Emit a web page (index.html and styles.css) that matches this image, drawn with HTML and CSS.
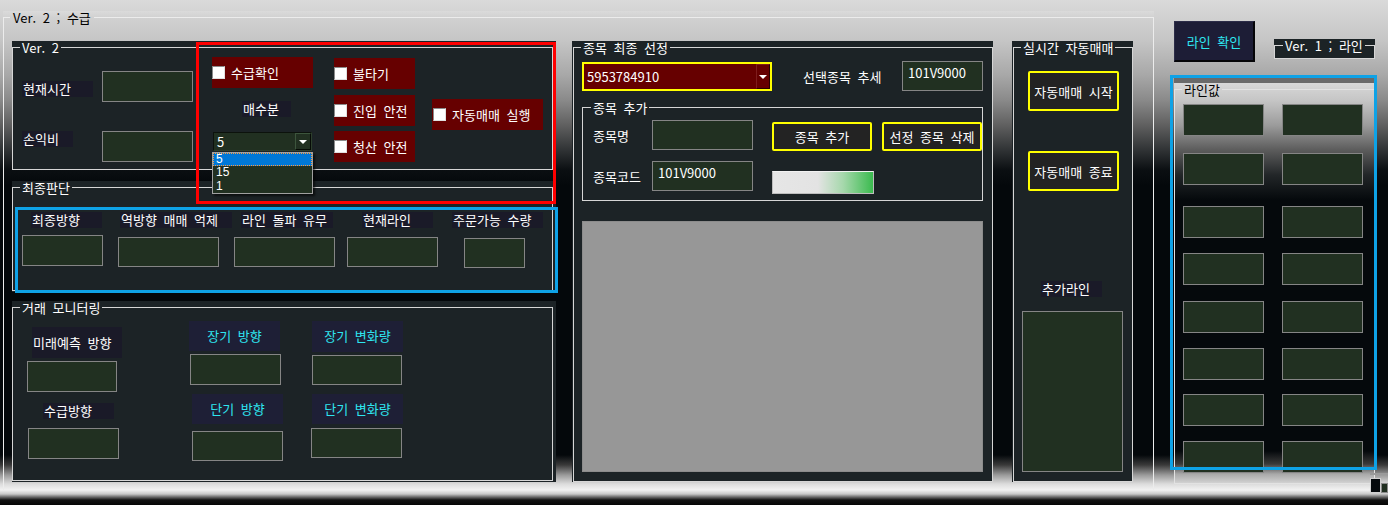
FILE: index.html
```html
<!DOCTYPE html>
<html lang="ko">
<head>
<meta charset="utf-8">
<title>Ver. 2 ; 수급</title>
<link rel="stylesheet" href="styles.css">
</head>
<body>
<div class="screen">
  <div class="tab">
    <fieldset class="outer">
      <legend>Ver. 2 ; 수급</legend>
      <div class="outer-body">
        <div class="col-left">
          <div class="panel p-ver2">
            <fieldset class="grp g-ver2">
              <legend>Ver. 2</legend>
              <div class="ver2-body">
                <div class="v2-a">
                  <span class="lbl l-time">현재시간</span>
                  <div class="box b-std"></div>
                  <span class="lbl l-pl">손익비</span>
                  <div class="box b-std"></div>
                </div>
                <div class="v2-b">
                  <div class="chk c-supply"><span class="cb"></span>수급확인</div>
                  <span class="lbl l-buy">매수분</span>
                  <div class="combo c-buy"><span class="combo-text">5</span><span class="drop-btn"><span class="tri"></span></span></div>
                  <ul class="droplist">
                    <li class="sel">5</li>
                    <li>15</li>
                    <li>1</li>
                  </ul>
                </div>
                <div class="v2-c">
                  <div class="chk c-fire"><span class="cb"></span>불타기</div>
                  <div class="chk c-entry"><span class="cb"></span>진입 안전</div>
                  <div class="chk c-exit"><span class="cb"></span>청산 안전</div>
                </div>
                <div class="v2-d">
                  <div class="chk c-auto"><span class="cb"></span>자동매매 실행</div>
                </div>
              </div>
            </fieldset>
          </div>

          <div class="panel p-final">
            <fieldset class="grp g-final">
              <legend>최종판단</legend>
              <div class="final-body">
                <div class="fcell f1"><span class="lbl">최종방향</span><div class="box"></div></div>
                <div class="fcell f2"><span class="lbl">역방향 매매 억제</span><div class="box"></div></div>
                <div class="fcell f3"><span class="lbl">라인 돌파 유무</span><div class="box"></div></div>
                <div class="fcell f4"><span class="lbl">현재라인</span><div class="box"></div></div>
                <div class="fcell f5"><span class="lbl">주문가능 수량</span><div class="box"></div></div>
              </div>
            </fieldset>
          </div>

          <div class="panel p-mon">
            <fieldset class="grp g-mon">
              <legend>거래 모니터링</legend>
              <div class="mon-body">
                <div class="mcol m1">
                  <span class="lbl lbl-mid l-future">미래예측 방향</span>
                  <div class="box b1"></div>
                  <span class="lbl l-supdir">수급방향</span>
                  <div class="box b2"></div>
                </div>
                <div class="mcol m2">
                  <span class="lbl lbl-cyan l-long">장기 방향</span>
                  <div class="box b3"></div>
                  <span class="lbl lbl-cyan l-short">단기 방향</span>
                  <div class="box b4"></div>
                </div>
                <div class="mcol m3">
                  <span class="lbl lbl-cyan l-longchg">장기 변화량</span>
                  <div class="box b5"></div>
                  <span class="lbl lbl-cyan l-shortchg">단기 변화량</span>
                  <div class="box b6"></div>
                </div>
              </div>
            </fieldset>
          </div>
        </div>

        <div class="panel p-sel">
          <fieldset class="grp g-sel">
            <legend>종목 최종 선정</legend>
            <div class="sel-body">
              <div class="sel-row1">
                <div class="combo c-stock"><span class="combo-text">5953784910</span><span class="drop-btn"><span class="tri"></span></span></div>
                <span class="plain l-trend">선택종목 추세</span>
                <div class="box b-trend">101V9000</div>
              </div>
              <fieldset class="grp g-add">
                <legend>종목 추가</legend>
                <div class="add-body">
                  <div class="add-row">
                    <span class="plain l-name">종목명</span>
                    <div class="box b-name"></div>
                    <div class="ybtn b-add">종목 추가</div>
                    <div class="ybtn b-del">선정 종목 삭제</div>
                  </div>
                  <div class="add-row r2">
                    <span class="plain l-name">종목코드</span>
                    <div class="box b-name">101V9000</div>
                    <div class="progress"></div>
                  </div>
                </div>
              </fieldset>
              <div class="graybox"></div>
            </div>
          </fieldset>
        </div>

        <div class="panel p-auto">
          <fieldset class="grp g-auto">
            <legend>실시간 자동매매</legend>
            <div class="auto-body">
              <div class="ybtn b-start">자동매매 시작</div>
              <div class="ybtn b-stop">자동매매 종료</div>
              <span class="lbl l-addline">추가라인</span>
              <div class="box b-addline"></div>
            </div>
          </fieldset>
        </div>
      </div>
    </fieldset>
  </div>

  <div class="side">
    <div class="side-top">
      <div class="btn-line">라인 확인</div>
      <div class="panel p-ver1">
        <fieldset class="grp g-ver1"><legend>Ver. 1 ; 라인</legend></fieldset>
      </div>
    </div>
    <div class="p-line">
      <fieldset class="grp g-line">
        <legend>라인값</legend>
        <div class="line-grid">
          <div class="box"></div><div class="box"></div>
          <div class="box"></div><div class="box"></div>
          <div class="box"></div><div class="box"></div>
          <div class="box"></div><div class="box"></div>
          <div class="box"></div><div class="box"></div>
          <div class="box"></div><div class="box"></div>
          <div class="box"></div><div class="box"></div>
          <div class="box"></div><div class="box"></div>
        </div>
      </fieldset>
    </div>
  </div>

  <div class="hl hl-red"></div>
  <div class="hl hl-blue1"></div>
  <div class="hl hl-blue2"></div>
  <div class="corner"><span class="corner-a"></span><span class="corner-b"></span></div>
</div>
</body>
</html>
```

FILE: styles.css
```css
* { box-sizing: border-box; }
html, body { margin: 0; padding: 0; }
body {
  width: 1388px;
  height: 505px;
  overflow: hidden;
  font-family: "Noto Sans CJK KR", "Noto Sans", "DejaVu Sans", sans-serif;
  font-size: 13px;
  line-height: 13px;
  word-spacing: 3px;
  color: #fff;
  background: linear-gradient(to bottom,
    #dadada 0px, #c6c6c6 40px, #a8a8a8 75px, #8a8a8a 100px, #606060 125px,
    #303335 150px, #0b0f12 170px, #04080b 185px, #04080b 455px,
    #3a3a3a 465px, #9a9a9a 475px, #dcdcdc 484px, #f2f2f2 490px,
    #c8c8c8 494px, #6a6a6a 497px, #121212 500px, #050505 505px);
}
.screen {
  position: relative;
  width: 1388px;
  height: 505px;
  display: flex;
  align-items: flex-start;
}

/* generic group box */
fieldset {
  margin: 0;
  padding: 0;
  border: 1px solid #d6d6d6;
  min-width: 0;
}
legend {
  margin-left: 7px;
  padding: 0 2px;
  height: 13px;
  line-height: 13px;
  font-size: 13px;
  white-space: nowrap;
  color: #fff;
}

/* outer tab / group */
.tab {
  flex: none;
  margin: 11px 0 0 3px;
  width: 1151px;
  height: 480px;
  background: linear-gradient(to bottom, rgba(255,255,255,0.14), rgba(255,255,255,0) 7px);
}
.outer {
  width: 1151px;
  height: 480px;
  padding: 17px 8px 0 8px;
  border-color: #ececec;
}
.outer > legend {
  color: #000;
  margin-left: -2px;
  padding: 0 3px;
}
.outer-body {
  display: flex;
  align-items: flex-start;
}
.col-left {
  flex: none;
  width: 544px;
  display: flex;
  flex-direction: column;
}
.panel {
  flex: none;
  background: #1c2326;
}

/* common controls */
.lbl {
  display: block;
  flex: none;
  height: 16px;
  line-height: 16px;
  background: #1a1a28;
  color: #fff;
  white-space: nowrap;
  padding-left: 1px;
}
.lbl-mid {
  display: flex;
  align-items: center;
}
.lbl-cyan {
  display: flex;
  align-items: center;
  justify-content: center;
  background: #1e1f36;
  color: #2ee6f0;
  padding: 0 0 1px 0;
}
.plain {
  display: flex;
  align-items: center;
  flex: none;
  white-space: nowrap;
  color: #fff;
}
.box {
  flex: none;
  background: #213021;
  border: 1px solid #858585;
  color: #fff;
  white-space: nowrap;
}
.chk {
  display: flex;
  align-items: center;
  gap: 6px;
  flex: none;
  height: 31px;
  background: #660000;
  color: #fff;
  white-space: nowrap;
}
.cb {
  flex: none;
  width: 13px;
  height: 13px;
  background: #fff;
  border: 1px solid #8a8a8a;
  border-right-color: #e0e0e0;
  border-bottom-color: #e0e0e0;
}
.ybtn {
  display: flex;
  align-items: center;
  justify-content: center;
  flex: none;
  background: #232323;
  border: 2px solid #ffff00;
  border-radius: 2px;
  color: #fff;
  white-space: nowrap;
}
.combo {
  display: flex;
  align-items: center;
  justify-content: space-between;
  flex: none;
  color: #fff;
}
.drop-btn {
  display: flex;
  align-items: center;
  justify-content: center;
  flex: none;
  border: 1px solid;
}
.tri {
  width: 0;
  height: 0;
  border-left: 4px solid transparent;
  border-right: 4px solid transparent;
  border-top: 4px solid #fff;
}

/* Ver. 2 */
.p-ver2 { height: 129px; }
.g-ver2 { width: 541px; height: 129px; }
.ver2-body {
  display: flex;
  align-items: flex-start;
}
.v2-a {
  flex: none;
  display: grid;
  grid-template-columns: 80px 91px;
  grid-template-rows: 31px 31px;
  row-gap: 29px;
  align-items: start;
  margin: 17px 0 0 9px;
}
.l-time { width: 71px; margin-top: 10px; }
.l-pl { width: 51px; }
.b-std { width: 91px; height: 31px; }

.v2-b {
  position: relative;
  flex: none;
  width: 101px;
  display: flex;
  flex-direction: column;
  align-items: flex-start;
  margin: 3px 0 0 19px;
}
.c-supply { width: 101px; }
.l-buy { width: 49px; margin: 13px 0 0 30px; }
.c-buy {
  width: 99px;
  height: 19px;
  margin: 15px 0 0 1px;
  padding-left: 3px;
  background: #213021;
  border: 1px solid #0c120c;
  border-right-color: #2d3f2d;
  border-bottom-color: #2d3f2d;
}
.c-buy .drop-btn {
  width: 16px;
  height: 17px;
  background: #213021;
  border-color: #3c553c #050a05 #050a05 #3c553c;
}
.droplist {
  position: absolute;
  left: 0;
  top: 95px;
  width: 101px;
  height: 42px;
  margin: 0;
  padding: 0;
  list-style: none;
  background: #213021;
  border: 1px solid #a0a0a0;
  box-shadow: 2px 2px 2px rgba(0, 0, 0, 0.6);
}
.droplist li {
  height: 13.4px;
  line-height: 13.4px;
  font-family: "Liberation Sans", "Noto Sans", sans-serif;
  font-size: 12px;
  padding-left: 3px;
  color: #fff;
}
.droplist li.sel {
  background: #0078d7;
  outline: 1px dotted #ff9a3c;
  outline-offset: -1px;
}

.v2-c {
  flex: none;
  width: 81px;
  display: flex;
  flex-direction: column;
  margin: 4px 0 0 21px;
}
.c-entry { margin-top: 6px; }
.c-exit { margin-top: 5px; }
.v2-d {
  flex: none;
  width: 111px;
  margin: 45px 0 0 17px;
}
.c-auto { padding-left: 1px; }

/* 최종판단 */
.p-final { height: 111px; margin-top: 11px; }
.g-final { width: 541px; height: 110px; }
.final-body {
  display: flex;
  align-items: flex-start;
  margin-top: 18px;
}
.fcell {
  flex: none;
  display: flex;
  flex-direction: column;
  align-items: flex-start;
}
.f1 { margin-left: 9px; width: 81px; }
.f1 .lbl { margin-left: 9px; width: 71px; }
.f1 .box { width: 81px; height: 31px; margin-top: 7px; }
.f2 { margin-left: 15px; width: 114px; }
.f2 .lbl { margin-left: 2px; width: 112px; }
.f2 .box { width: 101px; height: 30px; margin-top: 9px; }
.f3 { margin-left: 2px; width: 101px; }
.f3 .lbl { margin-left: 7px; width: 92px; }
.f3 .box { width: 101px; height: 30px; margin-top: 9px; }
.f4 { margin-left: 12px; width: 91px; }
.f4 .lbl { margin-left: 15px; width: 71px; }
.f4 .box { width: 91px; height: 30px; margin-top: 9px; }
.f5 { margin-left: 14px; width: 91px; }
.f5 .lbl { width: 91px; }
.f5 .box { margin-left: 12px; width: 61px; height: 30px; margin-top: 10px; }

/* 거래 모니터링 */
.p-mon { height: 181px; margin-top: 9px; }
.g-mon { width: 541px; height: 180px; }
.mon-body {
  display: flex;
  align-items: flex-start;
}
.mcol {
  flex: none;
  display: flex;
  flex-direction: column;
  align-items: flex-start;
}
.m1 { margin: 13px 0 0 14px; width: 95px; }
.l-future { margin-left: 5px; width: 90px; height: 31px; }
.b1 { margin-top: 3px; width: 90px; height: 31px; }
.l-supdir { margin: 11px 0 0 16px; width: 71px; }
.b2 { margin: 9px 0 0 1px; width: 91px; height: 31px; }
.m2 { margin: 7px 0 0 67px; width: 94px; }
.l-long { width: 91px; height: 30px; }
.b3 { margin: 3px 0 0 1px; width: 91px; height: 31px; }
.l-short { margin: 9px 0 0 3px; width: 91px; height: 30px; }
.b4 { margin: 7px 0 0 3px; width: 91px; height: 30px; }
.m3 { margin: 7px 0 0 28px; width: 92px; }
.l-longchg { margin-left: 1px; width: 91px; height: 31px; }
.b5 { margin: 3px 0 0 1px; width: 90px; height: 30px; }
.l-shortchg { margin: 9px 0 0 1px; width: 91px; height: 30px; }
.b6 { margin-top: 4px; width: 91px; height: 30px; }

/* 종목 최종 선정 */
.p-sel { width: 421px; height: 441px; margin-left: 16px; }
.g-sel { width: 420px; height: 441px; margin-left: 1px; }
.sel-body { padding-left: 8px; }
.sel-row1 {
  display: flex;
  align-items: flex-start;
  margin-top: 7px;
}
.c-stock {
  width: 190px;
  height: 29px;
  margin-top: 1px;
  padding-left: 3px;
  background: #660000;
  border: 2px solid #ffff00;
}
.c-stock .drop-btn {
  width: 14px;
  height: 25px;
  background: #660000;
  border-color: #7e1c1c #2a0000 #2a0000 #7e1c1c;
}
.l-trend { margin-left: 31px; width: 80px; height: 30px; }
.b-trend { margin-left: 19px; width: 81px; height: 30px; padding: 4px 5px; }
.g-add { margin-top: 10px; width: 401px; height: 100px; }
.g-add > legend { margin-left: 8px; }
.add-body { padding-left: 10px; }
.add-row {
  display: flex;
  align-items: flex-start;
  margin-top: 6px;
}
.add-row.r2 { margin-top: 10px; }
.l-name { width: 59px; height: 30px; }
.b-name { width: 101px; height: 30px; padding: 4px 5px; }
.b-add { margin: 2px 0 0 19px; width: 100px; height: 29px; }
.b-del { margin: 2px 0 0 10px; width: 100px; height: 29px; }
.progress {
  flex: none;
  margin: 10px 0 0 19px;
  width: 102px;
  height: 23px;
  border: 1px solid #bdbdbd;
  border-top-color: #f2f2f2;
  background: linear-gradient(to right, #e6e6e6 0%, #e3e3e3 45%, #a6d8ac 70%, #3bbb4f 100%);
}
.graybox {
  margin-top: 20px;
  width: 401px;
  height: 251px;
  background: #979797;
  border: 1px solid #8c8c8c;
}

/* 실시간 자동매매 */
.p-auto { width: 121px; height: 441px; margin-left: 19px; }
.g-auto { width: 120px; height: 441px; margin-left: 1px; }
.auto-body {
  display: flex;
  flex-direction: column;
  align-items: flex-start;
  padding-left: 8px;
}
.b-start { margin: 17px 0 0 6px; width: 91px; height: 40px; }
.b-stop { margin: 40px 0 0 6px; width: 91px; height: 40px; }
.l-addline { margin: 90px 0 0 19px; width: 61px; }
.b-addline { margin-top: 14px; width: 101px; height: 161px; }

/* right side */
.side {
  flex: none;
  width: 234px;
  display: flex;
  flex-direction: column;
}
.side-top {
  display: flex;
  align-items: flex-start;
  height: 62px;
}
.btn-line {
  flex: none;
  display: flex;
  align-items: center;
  justify-content: center;
  margin: 21px 0 0 20px;
  width: 81px;
  height: 41px;
  background: #1d1d36;
  color: #2ee6f0;
  border: 1px solid #050508;
  border-top-color: #2c2c48;
  border-left-color: #2c2c48;
  border-right-width: 2px;
  border-bottom-width: 2px;
  white-space: nowrap;
}
.p-ver1 { margin: 39px 0 0 19px; width: 101px; height: 20px; }
.g-ver1 { width: 101px; height: 20px; }
.g-ver1 > legend { margin-left: 8px; }
.p-line {
  flex: none;
  margin: 14px 0 0 20px;
  width: 201px;
  height: 408px;
  background: linear-gradient(to bottom,
    #6a6a6a 0px, #6a6a6a 7px, #d8d8d8 7px, #c6c6c6 24px, #9c9c9c 49px,
    #5c5c5c 74px, #222628 99px, #05090c 124px, #05090c 375px,
    #3a3a3a 388px, #a8a8a8 398px, #d6d6d6 408px);
}
.g-line {
  margin-top: 7px;
  width: 201px;
  height: 401px;
  border-color: #e2e2e2;
}
.g-line > legend { color: #000; }
.line-grid {
  display: grid;
  grid-template-columns: 81px 81px;
  column-gap: 18px;
  grid-template-rows: 49px 53px 47px 48px 47px 46px 47px 32px;
  align-items: start;
  margin: 8px 0 0 8px;
}
.line-grid .box { height: 32px; }

/* overlay highlight frames */
.hl {
  position: absolute;
  pointer-events: none;
}
.hl-red {
  left: 196px;
  top: 42px;
  width: 360px;
  height: 162px;
  border: 3px solid #ff0000;
}
.hl-blue1 {
  left: 15px;
  top: 207px;
  width: 543px;
  height: 86px;
  border: 3px solid #0ea2e6;
}
.hl-blue2 {
  left: 1170px;
  top: 75px;
  width: 207px;
  height: 395px;
  border: 3px solid #0ea2e6;
}
.corner {
  position: absolute;
  left: 1370px;
  top: 473px;
  width: 18px;
  height: 20px;
  display: flex;
  align-items: flex-end;
  border-top: 2px solid #9a9a9a;
}
.corner-a {
  width: 11px;
  height: 15px;
  background: #05090c;
  border: 1px solid #d0d0d0;
}
.corner-b {
  width: 7px;
  height: 10px;
  background: #213021;
  border: 1px solid #8a8a8a;
}
```
